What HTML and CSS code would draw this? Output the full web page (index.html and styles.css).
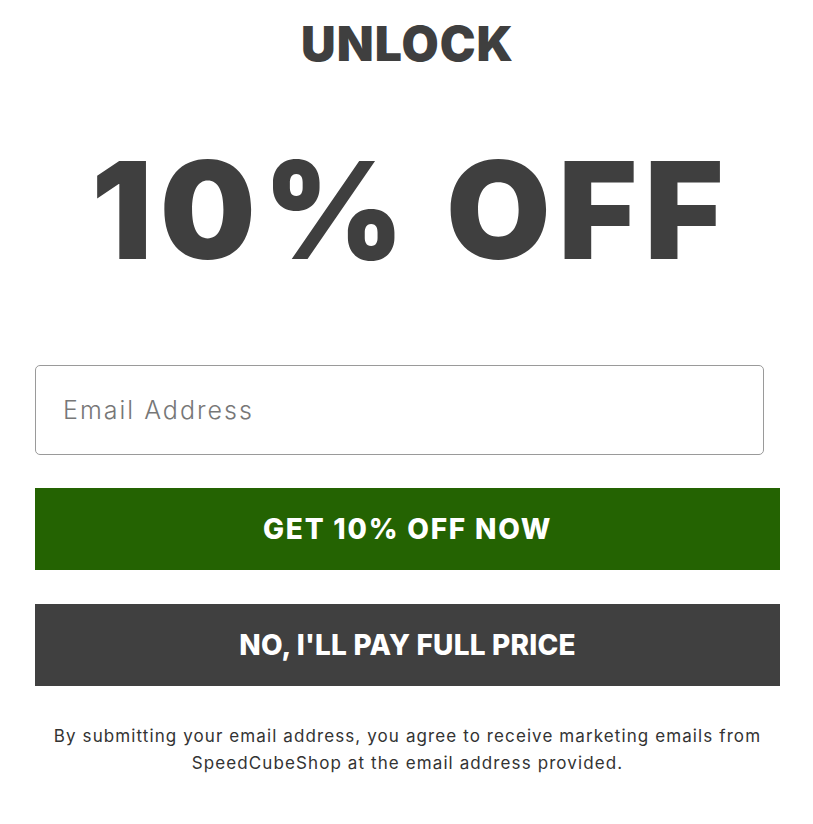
FILE: index.html
```html
<!DOCTYPE html>
<html>
<head>
<meta charset="utf-8">
<link rel="stylesheet" href="styles.css">
</head>
<body>
<div class="popup">
  <div class="eyebrow">UNLOCK</div>
  <div class="headline">10% OFF</div>
  <form class="form">
    <input class="email" type="email" placeholder="Email Address">
    <button class="btn btn-primary" type="button">GET 10% OFF NOW</button>
    <button class="btn btn-secondary" type="button">NO, I'LL PAY FULL PRICE</button>
  </form>
  <p class="legal">By submitting your email address, you agree to receive marketing emails from SpeedCubeShop at the email address provided.</p>
</div>
</body>
</html>
```

FILE: styles.css
```css
html, body {
  margin: 0;
  padding: 0;
  background: #ffffff;
}
body {
  font-family: Inter, "Noto Sans", sans-serif;
  color: #3f3f3f;
}
.popup {
  width: 745px;
  margin: 0 0 0 35px;
  display: flex;
  flex-direction: column;
  align-items: center;
}
.eyebrow {
  margin-top: 20px;
  font-size: 48px;
  line-height: 48px;
  font-weight: 900;
  letter-spacing: 1px;
  color: #3f3f3f;
}
.headline {
  margin-top: 62px;
  font-size: 135px;
  line-height: 160px;
  font-weight: 900;
  letter-spacing: 7.5px;
  text-indent: 7px;
  color: #3f3f3f;
}
.form {
  margin-top: 75px;
  width: 100%;
  display: flex;
  flex-direction: column;
}
.email {
  box-sizing: border-box;
  width: 729px;
  height: 90px;
  border: 1px solid #9a9a9a;
  border-radius: 5px;
  padding: 0 27px;
  font-family: Inter, sans-serif;
  font-size: 25px;
  letter-spacing: 2px;
  color: #333;
  outline: none;
}
.email::placeholder {
  color: #777777;
  font-weight: 300;
}
.btn {
  width: 100%;
  height: 82px;
  border: none;
  border-radius: 0;
  font-family: Inter, sans-serif;
  font-weight: 800;
  font-size: 28px;
  color: #ffffff;
  cursor: pointer;
}
.btn-primary {
  margin-top: 33px;
  background: #246302;
  letter-spacing: 1.8px;
}
.btn-secondary {
  margin-top: 34px;
  background: #404040;
  letter-spacing: 0.2px;
}
.legal {
  margin: 37px 0 0;
  text-align: center;
  font-size: 17px;
  line-height: 27px;
  color: #333333;
  font-weight: 400;
  letter-spacing: 1.1px;
}
```
